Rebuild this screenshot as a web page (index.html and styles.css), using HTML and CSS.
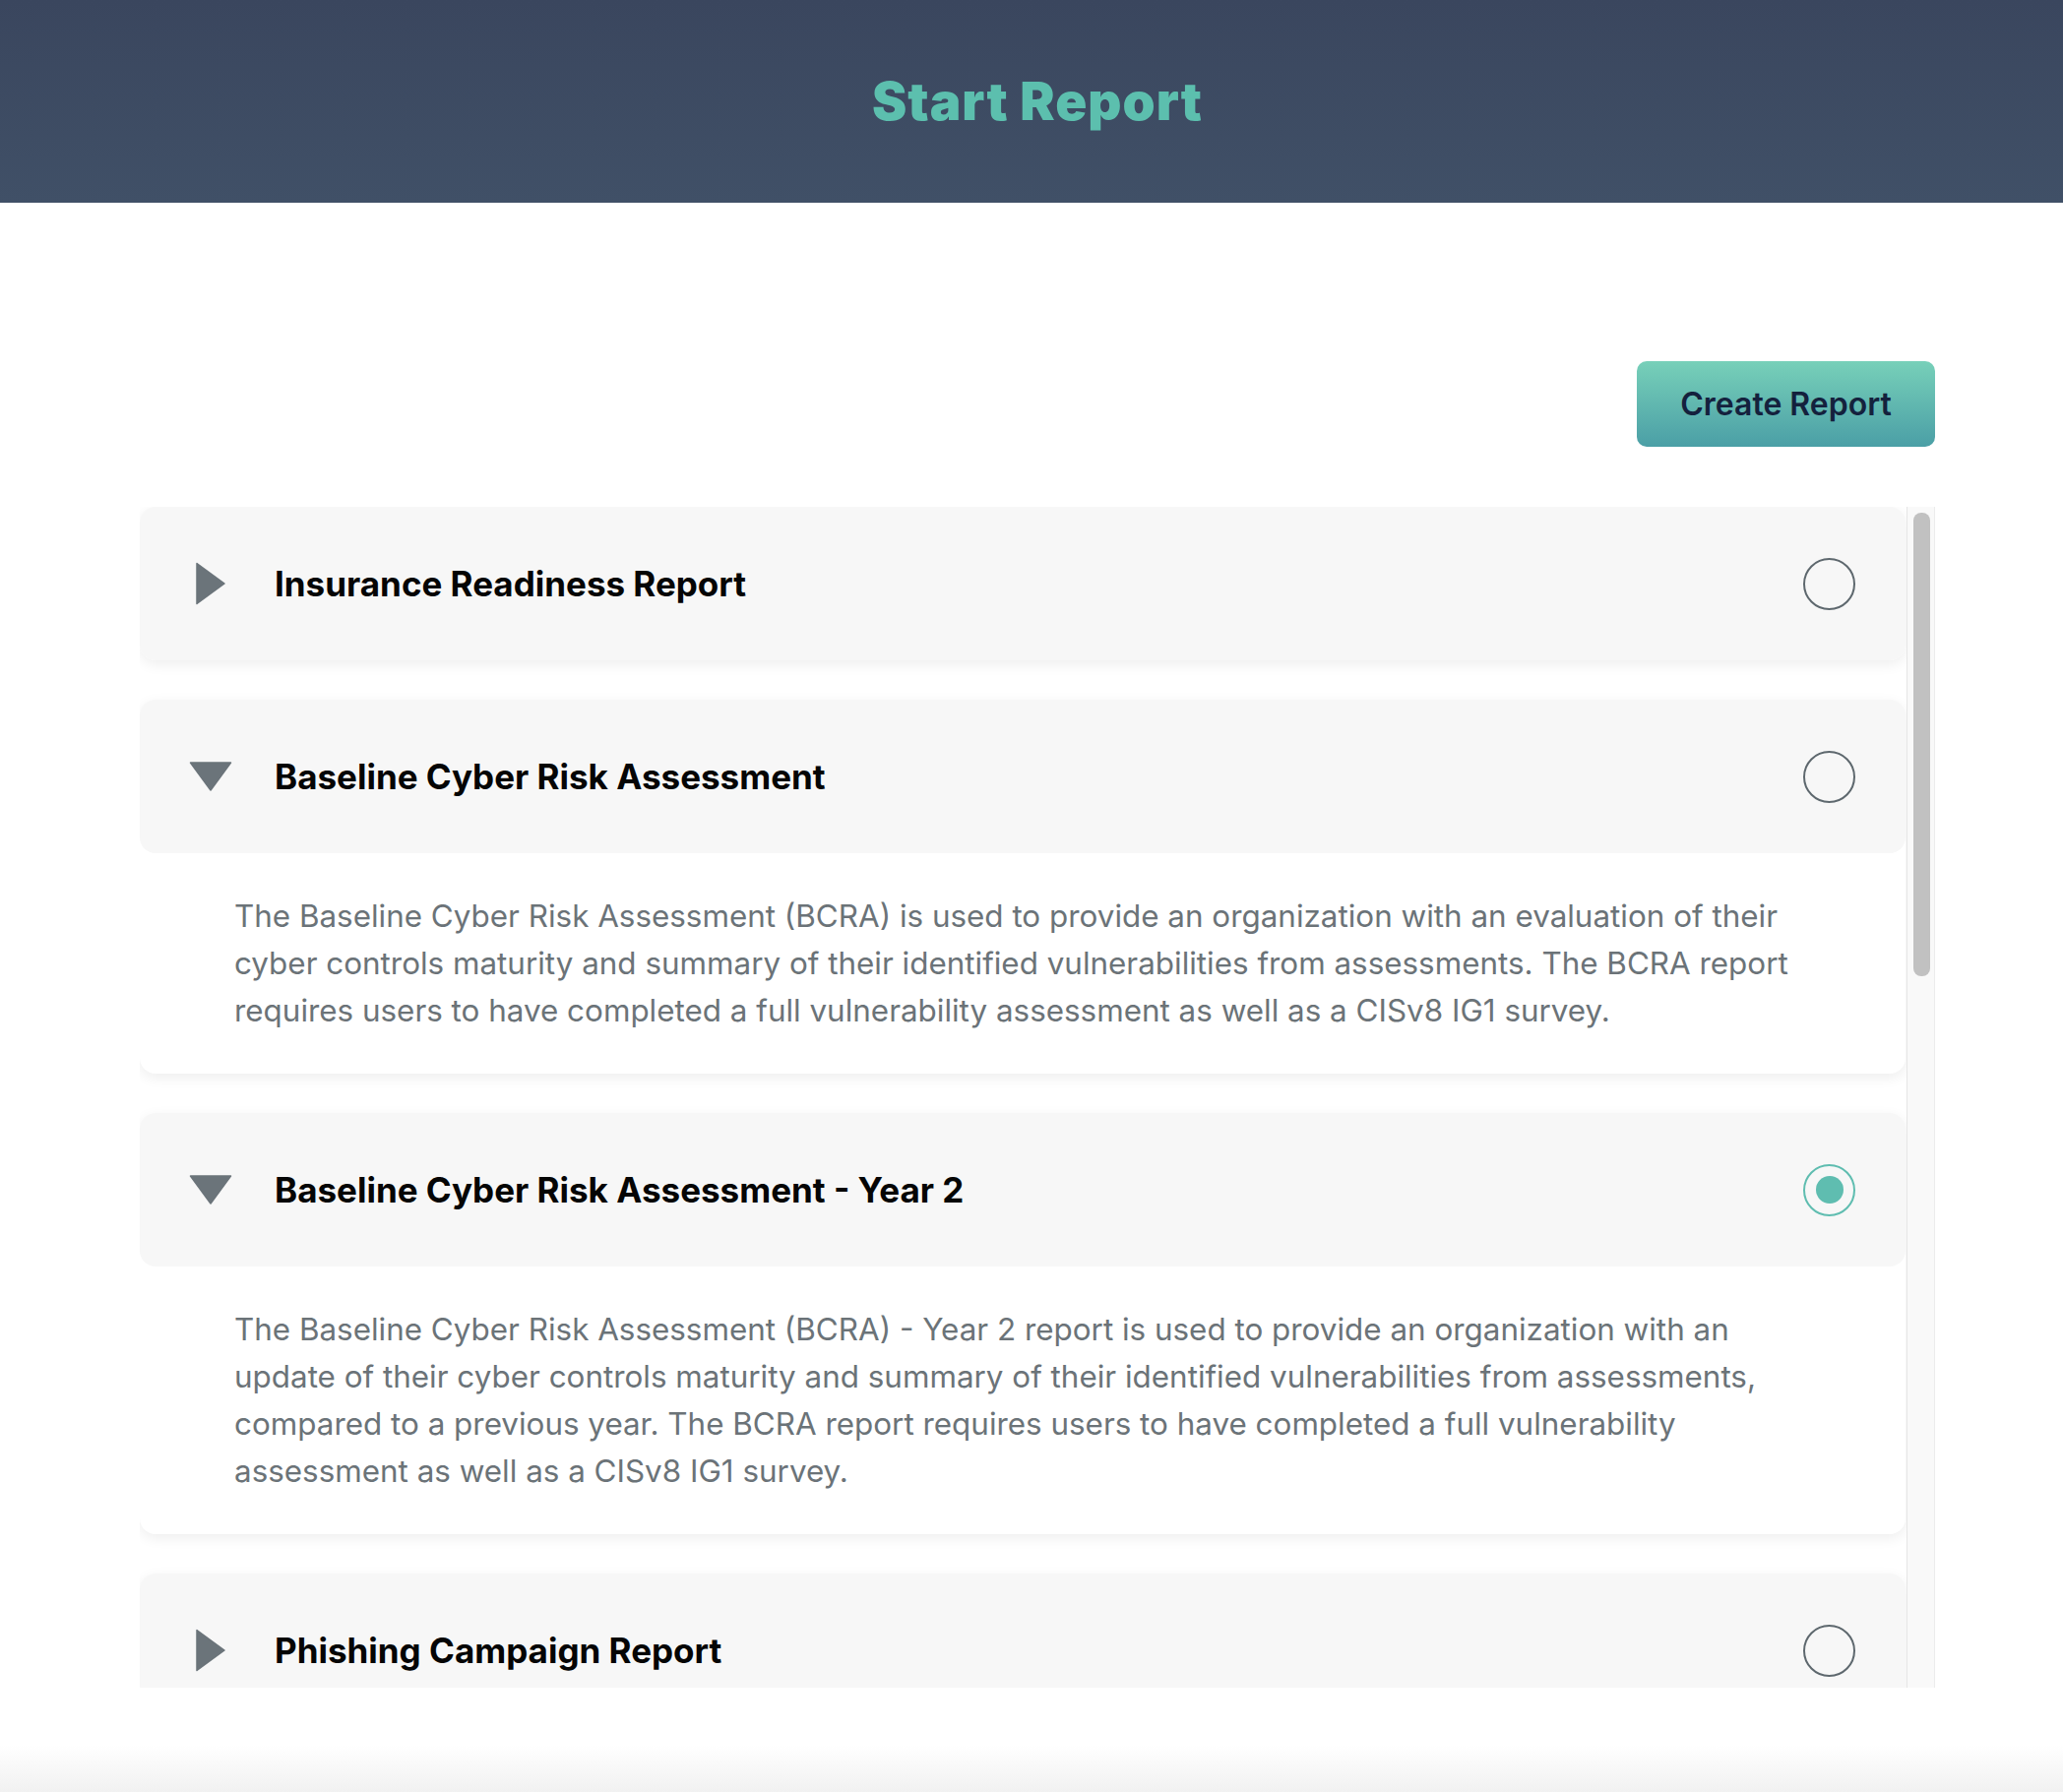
FILE: index.html
```html
<!DOCTYPE html>
<html lang="en">
<head>
<meta charset="utf-8">
<title>Start Report</title>
<link rel="stylesheet" href="styles.css">
</head>
<body>
<header class="topbar">
  <div class="wrap topbar-inner">
    <h1 class="page-title">Start Report</h1>
  </div>
</header>
<main class="wrap">
  <div class="actions">
    <button class="btn-create" type="button">Create Report</button>
  </div>
  <div class="list-frame">
    <div class="report-list">
      <section class="card">
        <div class="card-head">
          <span class="caret"><svg width="30" height="44" viewBox="0 0 30 44"><path d="M1 1.5 L29 22 L1 42.5 Z" fill="#6b747a" stroke="#6b747a" stroke-width="1.5" stroke-linejoin="round"/></svg></span>
          <h2 class="card-title">Insurance Readiness Report</h2>
          <span class="radio"></span>
        </div>
      </section>
      <section class="card">
        <div class="card-head">
          <span class="caret"><svg width="44" height="30" viewBox="0 0 44 30"><path d="M1.5 1 L42.5 1 L22 29 Z" fill="#6b747a" stroke="#6b747a" stroke-width="1.5" stroke-linejoin="round"/></svg></span>
          <h2 class="card-title">Baseline Cyber Risk Assessment</h2>
          <span class="radio"></span>
        </div>
        <div class="card-body">
          <p>The Baseline Cyber Risk Assessment (BCRA) is used to provide an organization with an evaluation of their cyber controls maturity and summary of their identified vulnerabilities from assessments. The BCRA report requires users to have completed a full vulnerability assessment as well as a CISv8 IG1 survey.</p>
        </div>
      </section>
      <section class="card">
        <div class="card-head">
          <span class="caret"><svg width="44" height="30" viewBox="0 0 44 30"><path d="M1.5 1 L42.5 1 L22 29 Z" fill="#6b747a" stroke="#6b747a" stroke-width="1.5" stroke-linejoin="round"/></svg></span>
          <h2 class="card-title">Baseline Cyber Risk Assessment - Year 2</h2>
          <span class="radio radio-on"><span class="radio-dot"></span></span>
        </div>
        <div class="card-body">
          <p>The Baseline Cyber Risk Assessment (BCRA) - Year 2 report is used to provide an organization with an update of their cyber controls maturity and summary of their identified vulnerabilities from assessments, compared to a previous year. The BCRA report requires users to have completed a full vulnerability assessment as well as a CISv8 IG1 survey.</p>
        </div>
      </section>
      <section class="card">
        <div class="card-head">
          <span class="caret"><svg width="30" height="44" viewBox="0 0 30 44"><path d="M1 1.5 L29 22 L1 42.5 Z" fill="#6b747a" stroke="#6b747a" stroke-width="1.5" stroke-linejoin="round"/></svg></span>
          <h2 class="card-title">Phishing Campaign Report</h2>
          <span class="radio"></span>
        </div>
      </section>
    </div>
    <div class="scroll-track">
      <div class="scroll-thumb"></div>
    </div>
  </div>
</main>
<div class="page-foot"></div>
</body>
</html>
```
FILE: styles.css
```css
* { box-sizing: border-box; }
html, body { margin: 0; padding: 0; }
body {
  font-family: Inter, "Noto Sans", "Liberation Sans", sans-serif;
  background: #ffffff;
  color: #000;
}
.wrap {
  margin-left: 142px;
  width: 1824px;
}
.topbar {
  height: 206px;
  background: linear-gradient(to bottom, #3a465e, #405067);
}
.topbar-inner {
  height: 100%;
  display: flex;
  align-items: center;
  justify-content: center;
}
.page-title {
  margin: 0;
  font-size: 53px;
  font-weight: 900;
  letter-spacing: 1px;
  color: #5cbfae;
  line-height: 1;
}
.actions {
  display: flex;
  justify-content: flex-end;
  padding-top: 161px;
  padding-bottom: 61px;
}
.btn-create {
  width: 303px;
  height: 87px;
  border: 0;
  border-radius: 10px;
  background: linear-gradient(to bottom, #77d0b9, #4b9fa6);
  color: #14213d;
  font-family: Inter, "Noto Sans", sans-serif;
  font-size: 32px;
  font-weight: 600;
  cursor: pointer;
}
.list-frame {
  display: flex;
  height: 1200px;
}
.report-list {
  flex: 1;
  min-width: 0;
  overflow: hidden;
  display: flex;
  flex-direction: column;
  gap: 40px;
  padding-right: 1px;
}
.scroll-track {
  flex: none;
  width: 29px;
  background: #f9f9f9;
  border-left: 1px solid #e6e6e6;
  border-right: 1px solid #ececec;
  padding: 6px 4px 0 6px;
}
.scroll-thumb {
  height: 471px;
  border-radius: 8px;
  background: #c1c1c1;
}
.card {
  flex: none;
  background: #fff;
  border-radius: 16px;
  box-shadow: 0 4px 14px rgba(0, 0, 0, 0.07);
}
.card-head {
  height: 156px;
  display: flex;
  align-items: center;
  padding: 0 51px 0 50px;
  background: #f7f7f7;
  border-radius: 16px;
}
.caret {
  width: 44px;
  height: 44px;
  display: flex;
  align-items: center;
  justify-content: center;
  flex: none;
}
.caret svg { display: block; }
.card-title {
  margin: 0 0 0 43px;
  flex: 1;
  font-size: 35px;
  font-weight: 700;
  color: #050505;
  line-height: 1.2;
}
.radio {
  width: 53px;
  height: 53px;
  border-radius: 50%;
  border: 2px solid #5e686e;
  flex: none;
  display: flex;
  align-items: center;
  justify-content: center;
}
.radio-on { border-color: #5fbdb0; }
.radio-dot {
  width: 28px;
  height: 28px;
  border-radius: 50%;
  background: #5fbdb0;
}
.card-body {
  padding: 40px 96px;
}
.card-body p {
  margin: 0;
  font-size: 31.4px;
  line-height: 48px;
  color: #6b7378;
}
.page-foot {
  height: 106px;
  background: linear-gradient(to bottom, #ffffff 55%, #f1f1f1);
}
```
